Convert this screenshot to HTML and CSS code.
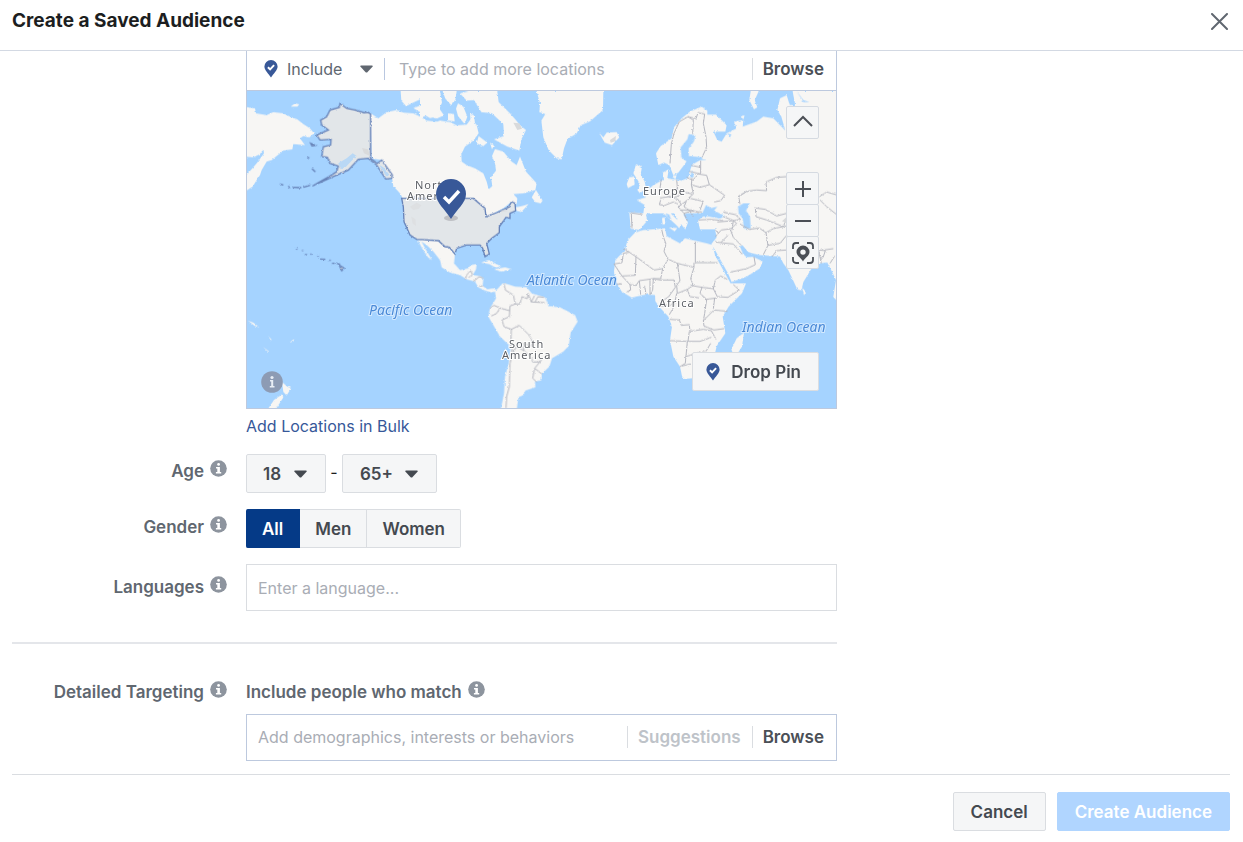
FILE: index.html
```html
<!DOCTYPE html>
<html lang="en">
<head>
<meta charset="utf-8">
<meta name="viewport" content="width=device-width, initial-scale=1">
<title>Create a Saved Audience</title>
<link rel="stylesheet" href="styles.css">
</head>
<body>
<svg class="sprite" aria-hidden="true">
  <symbol id="info" viewBox="0 0 17 17">
    <circle cx="8.500" cy="8.500" r="8.300" fill="#8d949e"/>
    <circle cx="8.600" cy="4.400" r="1.400" fill="#fff"/>
    <path d="M6 7h3.900v5h1.300v1.500H5.900V12h1.400V8.500H6z" fill="#fff"/>
  </symbol>
  <symbol id="pin" viewBox="0 0 14 18">
    <path d="M7 0a6.600 6.600 0 0 0-6.600 6.600C.4 10.400 4.800 14 7 17.600 9.200 14 13.600 10.400 13.600 6.600A6.600 6.600 0 0 0 7 0z" fill="#385898"/>
    <path d="M3.900 7.200l2.200 2.100 4-4.200" fill="none" stroke="#fff" stroke-width="1.900"/>
  </symbol>
  <symbol id="caret" viewBox="0 0 13 8">
    <path d="M1 .5h11q1.200.3.500 1.300L7.600 7q-1.100 1-2.200 0L.5 1.800Q-.2.800 1 .5z" fill="currentColor"/>
  </symbol>
</svg>

<header class="header">
  <h1 class="title">Create a Saved Audience</h1>
  <button class="close" type="button" aria-label="Close">
    <svg width="17" height="17" viewBox="0 0 17 17"><path d="M1 1l15 15M16 1L1 16" stroke="#606770" stroke-width="2" stroke-linecap="round"/></svg>
  </button>
</header>

<main class="form">
  <section class="row">
    <div class="control">
      <div class="location">
        <div class="location-bar">
          <svg class="pin" width="14" height="18"><use href="#pin"/></svg>
          <span class="picker">
            <select class="include" aria-label="Include or exclude"><option>Include</option></select>
            <svg class="caret" width="13" height="8"><use href="#caret"/></svg>
          </span>
          <input class="bar-input" type="text" placeholder="Type to add more locations" aria-label="Add locations">
          <button class="browse" type="button">Browse</button>
        </div>
        <div class="map">
          <svg class="world" viewBox="0 0 589 317" preserveAspectRatio="xMidYMid slice" role="img" aria-label="World map">
            <defs>
              <filter id="coast" x="-5%" y="-5%" width="110%" height="110%">
                <feTurbulence type="fractalNoise" baseFrequency="0.16" numOctaves="3" seed="4"/>
                <feDisplacementMap in="SourceGraphic" scale="7" xChannelSelector="R" yChannelSelector="G"/>
              </filter>
            </defs>
            <rect width="589" height="317" fill="#a5d3ff"/>
            <g transform="translate(-7 -41) scale(.33333)">
              <g class="land" filter="url(#coast)">
                <!-- Siberia and western Canada -->
                <path d="M0 168L45 175 48 190 80 195 100 186 130 190 150 200 172 208 190 222 210 235 222 250 208 262 190 258 180 265 195 285 160 282 157 298 130 302 95 330 80 335 65 360 60 375 50 390 38 410 22 420 0 420V350L22 372 50 340 72 310 70 298 60 312 40 322 0 318z"/>
                <path d="M152 170L165 160 178 163 172 170z"/>
                <path d="M392 190L415 205 440 186 470 180 490 188 520 190 545 202 560 212 600 216V470L490 450 482 432 460 408 455 380 425 330 395 325z"/>
                <path d="M482 124H545V146L515 160 498 168 484 152zM520 174L545 165 562 150 600 130V198L570 204 550 192z"/>
                <!-- Canada, Arctic islands, Greenland, Iceland -->
                <g transform="translate(540)">
                  <path d="M0 212L30 222 60 212 90 216 110 226 140 224 154 205 170 225 176 250 160 272 135 290 124 312 125 335 140 345 165 355 190 370 200 395 206 418 217 408 213 382 228 362 225 340 216 318 225 297 250 305 275 335 290 345 300 320 318 365 350 400 346 420 310 430 280 432 292 445 290 462 275 455 250 475 200 502 190 480 160 445 0 470z"/>
                  <path d="M0 124H60L66 158 58 176 72 196 50 206 20 196 0 204z"/>
                  <path d="M68 124H110L106 150 92 164 76 146zM114 160L130 170 142 200 134 222 114 198 108 176zM84 190L102 192 104 214 84 212zM120 130L146 124H232L236 156 270 190 284 206 300 225 318 240 304 268 298 302 262 290 222 268 252 258 250 222 216 190 184 186 162 150 140 152z"/>
                  <path d="M150 190L162 196 165 220 152 212zM176 258L202 278 190 288 170 280zM210 278L222 286 216 298z"/>
                  <path d="M286 472L306 468 326 462 304 486 288 482zM335 442L348 420 368 452 362 460 346 456z"/>
                  <path d="M350 124H550L549 180 510 214 482 226 470 250 442 268 432 295 425 328 410 325 386 300 370 262 364 212 376 192 358 186 360 160z"/>
                  <path d="M537 248L550 262 560 248 590 246 598 262 576 285 554 278z"/>
                </g>
                <!-- Central and South America -->
                <g transform="translate(480 390)">
                  <path d="M50 175L115 182 135 200 148 202 165 222 162 250 180 270 205 265 212 255 230 252 228 268 218 285 240 288 250 295 248 318 262 328 280 325 292 332 275 338 255 332 235 322 225 305 200 298 180 285 150 278 125 262 120 240 100 215 80 195z"/>
                  <path d="M53 180L64 184 77 208 96 240 84 232 68 208zM243 248L265 240 304 260 286 263 268 252zM282 268L315 262 336 268 304 275z"/>
                  <path d="M285 335L308 310 322 312 345 320 380 322 395 340 435 352 446 378 480 382 525 405 533 425 512 458 506 498 490 515 456 535 448 560 425 582 425 600 405 605 406 622 376 632 370 645 355 652 350 690H302L312 640 315 590 326 550 332 500 300 470 265 410 270 385 288 355z"/>
                </g>
                <!-- Northern Europe and Russia -->
                <g transform="translate(1110)">
                  <path d="M145 345L138 310 152 288 185 265 192 232 215 205 240 185 275 170 292 182 292 330 240 320 226 340 205 368 190 376 178 345 162 338z"/>
                  <path d="M162 388L158 368 176 358 172 385 215 392 234 384 245 345 270 330 288 330 284 194 318 194 350 225 346 245 310 245 322 270 335 275 350 250 380 235 372 215 400 210 398 230 440 215 460 200 490 205 526 242 514 200 502 180 510 145 530 135 538 160 556 170 548 124H700V490H110L112 470 80 450 108 442 100 432 130 405z"/>
                  <path d="M90 430L108 415 104 395 92 372 96 350 78 343 70 370 84 392 90 404 82 420zM50 402L58 382 72 380 74 404 54 414zM422 124H446L434 150 442 172 432 178 418 150zM392 198L404 196 400 208zM185 378L200 376 196 388z"/>
                </g>
                <!-- Southern Europe, Asia, Africa -->
                <g transform="translate(1080 450)">
                  <path d="M88 38L130 40 134 10H730V310L700 290 708 240 696 215 682 188 655 190 635 205 610 246 604 272 592 268 565 210 550 190 540 170 480 165 445 158 428 136 420 140 434 164 458 170 488 184 480 205 440 230 395 246 384 220 345 150 334 132 350 112 345 88 300 88 294 62 310 48 300 26 270 36 250 44 264 68 256 88 238 66 222 40 200 22 206 34 228 56 246 66 238 84 226 72 190 40 160 30 138 44 142 62 118 90 92 86z"/>
                  <path d="M105 98L130 90 195 85 200 108 240 130 255 115 320 130 338 135 345 165 375 220 392 250 438 250 426 280 386 320 368 350 376 400 350 438 345 460 300 510 275 535 248 538 240 500 220 470 210 420 216 380 205 350 182 325 166 304 165 285 140 283 95 293 65 275 48 245 42 215 46 180 75 150 82 122z"/>
                  <path d="M432 398L426 440 404 474 394 448 410 415zM206 82L232 84 224 94zM186 54L194 52 196 72 188 74zM606 262L618 276 612 286zM698 288L712 296V304z"/>
                </g>
                <!-- New Zealand and Pacific islands -->
                <g transform="translate(0 510)">
                  <path d="M82 570L102 540 126 523 130 532 106 570zM126 486L142 500 154 504 140 526 130 516zM148 368L163 357 160 364zM68 380L88 395 84 395zM24 302L40 308 58 322 44 318zM84 348L96 360 92 360z"/>
                </g>
              </g>

              <g class="water" filter="url(#coast)">
                <g transform="translate(1110)">
                  <path d="M214 322L212 292 232 268 236 252 256 256 252 274 236 296 237 318 276 322 276 329 248 333 244 350 226 358 230 335zM272 500L288 465 304 474 322 470 312 482 345 498 330 506 296 500zM384 470L400 460 420 460 408 482 420 500 422 536 402 536 398 506 386 490zM534 136L546 130 554 160 540 166zM560 124L580 150 598 156 580 156zM240 384L246 360 252 380zM352 250L364 254 360 262z"/>
                </g>
                <g transform="translate(1080 450)">
                  <path d="M196 40L208 44 214 60 202 52zM420 136L444 156 470 168 440 172 428 160z"/>
                </g>
              </g>

              <g class="borders" filter="url(#coast)">
                <g transform="translate(480 390)">
                  <path d="M196 298L200 285 212 272 218 285 206 292M220 304L238 290 250 295M238 318L248 318M312 312L316 330 340 345 346 372 330 378 328 410 306 420 312 440 334 448 358 436 384 462 395 478 396 498M346 372L360 372 366 350 382 356 384 340M384 340L394 366 404 346M404 368L414 350 432 352M394 366L434 368M270 385L282 376 300 384 290 400 274 408M300 384L328 392M334 448L332 500 340 515 350 500 372 512 368 490 396 498M340 515L330 550 328 620 320 650 318 684M372 512L395 535 398 546 416 546 424 540 404 565 398 595 410 606M404 565L426 582"/>
                </g>
                <g transform="translate(1110)">
                  <path d="M180 340L184 282 192 250 208 215 234 200 250 210 248 252M234 200L258 206 264 188 284 192 280 220 288 260 290 292 276 322M272 332L272 372 238 364M244 346L272 352M230 382L248 390 266 372 290 376 298 404 270 412 244 404 246 384M298 404L344 436 332 452 312 456M244 404L250 432 236 444 262 450 280 454 270 480M154 388L150 414 176 440 200 440 222 426 246 432M150 444L176 440 204 448 214 464 238 446M152 450L148 464 164 466 190 456 204 462M214 464L204 470 222 490 240 484 250 500M230 452L222 470 242 484 276 486M222 490L232 512M64 490L66 534M60 488L98 494M200 390L204 430M530 380L500 382 468 396 470 422 440 420 410 424 386 440 390 462M436 474L466 478 500 498 530 490M436 474L438 500 470 510 520 530 530 504M628 440L650 426 678 434M630 450L650 470 678 492M340 486L376 494 392 508 372 512 340 500M370 512L366 540M410 424L384 440"/>
                </g>
                <g transform="translate(1080 450)">
                  <path d="M185 88L190 110 198 132 192 154 204 178 188 206 162 210 108 170 72 146M108 170L106 226 66 228 42 192M42 192L66 188 70 160 88 156M206 178L232 190 282 202M286 125V188H354M282 188L282 202 272 236 280 256 262 268 232 280 230 256 240 242 232 190M188 206L182 236 160 236 118 242 108 256 90 254 66 228M160 236L158 270 150 284M118 242L122 284M134 258L138 284M150 240V284M90 254L92 270 80 276M66 252L50 252M160 236L180 240 222 240 226 262 206 290 186 304M230 280L222 320 208 344M272 256L306 262 340 266 346 240 362 228 382 238M340 266L352 290 384 292 418 270 400 254M306 262L300 280 320 298 348 294M320 298L314 340 310 362 342 330 384 334M344 294L340 326M262 268L270 290 300 294 M182 318L210 318 226 300M310 362L312 378 342 390 372 386M210 358L238 360 244 376 268 374 270 394 310 388 334 392 348 418M210 422L262 424 300 424 334 412M268 394L264 424M262 424L256 490 240 500M256 470L290 460 318 454 332 430M246 498L270 492M346 110L364 90 394 86 410 70 400 62 352 66M346 126L362 128 384 106M362 128L400 132 428 164M390 86L400 112 424 136M392 216L440 206 466 194 462 170M420 72L448 88 478 84 498 98 504 136 490 164M498 98L520 86 558 78M504 136L540 130 560 106M516 170L530 152 560 150M660 150L676 152 670 170 662 180M672 150L700 146M690 190L704 168M656 152L664 190M240 30L276 30 300 40M296 60L330 58 370 62M346 90L356 100"/>
                </g>
              </g>

              <g class="selected" filter="url(#coast)">
                <path d="M300 160L320 175 345 180 372 188 385 187 392 192V325L412 340 425 330 457 375 455 385 437 387 410 345 385 325 355 328 325 360 290 375 235 400 228 402 270 378 290 365 295 348 270 340 262 322 245 320 250 290 272 285 273 268 240 270 230 255 265 240 245 225 242 210 260 200 270 180 298 172z"/>
                <path d="M228 402L218 408M210 406L190 412M184 413L158 412M150 414L145 408M130 405L120 402M216 356L226 366M202 322L208 324M212 280L226 286 216 288zM168 596L172 598M186 601L190 602M195 614L201 614M211 612L215 613M232 617L236 619M239 627L256 628M268 630L272 632M276 640L284 640M290 640L300 643M298 646L312 654 305 662z"/>
                <path transform="translate(480 390)" d="M5 55H220L255 85 258 110 290 98 325 82 335 65 345 70 347 92 330 100 330 115 318 112 298 140 298 158 275 175 260 190 268 222 255 230 248 205 240 195 200 195 170 205 165 222 148 202 135 200 115 182 50 178 30 165 12 125 10 80z"/>
              </g>
              <g class="inlets" filter="url(#coast)">
                <path d="M295 340L320 325 338 310 350 318 335 332 318 350 302 358zM418 345L430 352 448 374 440 380 428 362z"/>
              </g>
              <g fill="#d9dadb">
                <path d="M366 294L384 298 390 318 372 310zM820 218L838 220 846 236 832 240zM1110 270L1128 258 1126 274 1112 278zM1626 514L1640 500V518z"/>
                <path d="M510 470l20-12 14 8-8 10-16 4zM514 500l4 20 10 8-2-20zM780 482l14-4 8 6-16 3z" opacity=".5"/>
              </g>
            </g>
            <g class="places">
              <text x="168" y="98">North</text>
              <text x="160" y="109">America</text>
              <text x="396" y="104">Europe</text>
              <text x="412" y="216">Africa</text>
              <text x="262" y="257">South</text>
              <text x="255" y="268">America</text>
            </g>
            <g class="oceans">
              <text x="122" y="224">Pacific Ocean</text>
              <text x="280" y="194">Atlantic Ocean</text>
              <text x="495" y="241">Indian Ocean</text>
            </g>
            <ellipse cx="204" cy="127" rx="7" ry="3" fill="#6d6a72" opacity=".3"/>
            <path d="M204 88a15 15 0 0 0-15 15c0 9 9 15 15 25 6-10 15-16 15-25a15 15 0 0 0-15-15z" fill="#385898"/>
            <path d="M197 106l5 5 10-11" fill="none" stroke="#fff" stroke-width="3.400"/>
          </svg>

          <button class="map-info" type="button" aria-label="Map information">
            <svg width="22" height="22" viewBox="0 0 22 22"><circle cx="11" cy="11" r="10.800" fill="#8d9bb4"/><circle cx="11" cy="6.500" r="1.600" fill="#e9eef5"/><path d="M9 9h3.200v6h1.300v1.500H8.800V15h1.400v-4.500H9z" fill="#e9eef5"/></svg>
          </button>
          <div class="map-tools">
            <button class="tool" type="button" aria-label="Collapse map">
              <svg width="20" height="16" viewBox="0 0 20 16"><path d="M1 11l9-9 9 9" fill="none" stroke="#4b4f56" stroke-width="2"/></svg>
            </button>
            <div class="zoom">
              <button class="tool" type="button" aria-label="Zoom in">
                <svg width="16" height="16" viewBox="0 0 16 16"><path d="M0 8h16M8 0v16" stroke="#4b4f56" stroke-width="2"/></svg>
              </button>
              <button class="tool" type="button" aria-label="Zoom out">
                <svg width="16" height="16" viewBox="0 0 16 16"><path d="M0 8h16" stroke="#4b4f56" stroke-width="2"/></svg>
              </button>
              <button class="tool" type="button" aria-label="Centre on pin">
                <svg width="22" height="22" viewBox="0 0 22 22"><path d="M1 7V4a3 3 0 0 1 3-3h3M15 1h3a3 3 0 0 1 3 3v3M21 15v3a3 3 0 0 1-3 3h-3M7 21H4a3 3 0 0 1-3-3v-3" fill="none" stroke="#4b4f56" stroke-width="1.800"/><path fill-rule="evenodd" d="M11 3.500a6.500 6.500 0 0 0-6.500 6.500c0 3.900 4.500 5.500 6.500 9.500 2-4 6.500-5.600 6.500-9.500A6.500 6.500 0 0 0 11 3.500zm0 3.900a2.700 2.700 0 1 1 0 5.400 2.700 2.700 0 0 1 0-5.400z" fill="#4b4f56"/></svg>
              </button>
            </div>
          </div>
          <button class="button drop-pin" type="button">
            <svg width="14" height="18"><use href="#pin"/></svg>Drop Pin
          </button>
        </div>
      </div>
      <a class="bulk" href="#">Add Locations in Bulk</a>
    </div>
  </section>

  <section class="row">
    <div class="label"><label for="age-min">Age</label><svg class="info" width="17" height="17"><use href="#info"/></svg></div>
    <div class="control ages">
      <span class="picker">
        <select class="button age age-min" id="age-min"><option>18</option></select>
        <svg class="caret age-caret" width="13" height="8"><use href="#caret"/></svg>
      </span>
      <span class="dash">-</span>
      <span class="picker">
        <select class="button age age-max" aria-label="Maximum age"><option>65+</option></select>
        <svg class="caret age-caret" width="13" height="8"><use href="#caret"/></svg>
      </span>
    </div>
  </section>

  <section class="row">
    <div class="label"><span id="gender">Gender</span><svg class="info" width="17" height="17"><use href="#info"/></svg></div>
    <div class="control segments" role="group" aria-labelledby="gender">
      <button class="segment active" type="button" aria-pressed="true">All</button>
      <button class="segment" type="button" aria-pressed="false">Men</button>
      <button class="segment" type="button" aria-pressed="false">Women</button>
    </div>
  </section>

  <section class="row">
    <div class="label tall"><label for="languages">Languages</label><svg class="info" width="17" height="17"><use href="#info"/></svg></div>
    <input class="field" id="languages" type="text" placeholder="Enter a language...">
  </section>

  <hr class="rule">

  <section class="row">
    <div class="label plain"><span>Detailed Targeting</span><svg class="info" width="17" height="17"><use href="#info"/></svg></div>
    <div class="control">
      <div class="label plain match"><label for="match">Include people who match</label><svg class="info" width="17" height="17"><use href="#info"/></svg></div>
      <div class="targeting">
        <input class="bar-input" id="match" type="text" placeholder="Add demographics, interests or behaviors">
        <button class="browse muted" type="button" disabled>Suggestions</button>
        <button class="browse" type="button">Browse</button>
      </div>
    </div>
  </section>
</main>

<footer class="footer">
  <button class="button" type="button">Cancel</button>
  <button class="button primary" type="button" disabled>Create Audience</button>
</footer>
</body>
</html>
```
FILE: styles.css
```css
* { box-sizing: border-box; }

body {
  margin: 0;
  min-height: 100vh;
  display: flex;
  flex-direction: column;
  background: #fff;
  color: #606770;
  font: 400 16px/22px Inter, "Liberation Sans", sans-serif;
}

button, input, select {
  margin: 0;
  padding: 0;
  border: 0;
  background: none;
  color: inherit;
  font: inherit;
}

button { cursor: pointer; }
svg { display: block; flex: none; }
.sprite { position: absolute; width: 0; height: 0; }

.header {
  display: flex;
  align-items: center;
  justify-content: space-between;
  height: 51px;
  padding: 0 15px 8px 12px;
  border-bottom: 1px solid #d3d9e3;
}

.title {
  margin: 0;
  color: #1c1e21;
  font-size: 19px;
  font-weight: 700;
  line-height: 24px;
}

.form {
  flex: 1;
  display: flex;
  flex-direction: column;
  gap: 16px;
  width: 100%;
  max-width: 849px;
  padding: 0 12px 13px;
}

.row {
  display: grid;
  grid-template-columns: 215px minmax(0, 1fr);
  column-gap: 19px;
}

.control { grid-column: 2; min-width: 0; }

.label {
  display: flex;
  justify-content: flex-end;
  gap: 6px;
  padding-top: 7px;
  font-size: 17px;
  font-weight: 600;
}

.tall { padding-top: 12px; }
.plain { padding-top: 0; }
.match { justify-content: flex-start; margin-bottom: 11px; }

.location { border: 1px solid #bdc9de; border-top: 0; }

.location-bar {
  display: flex;
  align-items: center;
  height: 40px;
  padding: 0 0 3px 17px;
  border-bottom: 1px solid #bdc9de;
}

.picker { position: relative; display: inline-flex; }

.include {
  appearance: none;
  width: 107px;
  height: 22px;
  padding-left: 9px;
  border-right: 1px solid #b9c7e0;
}

.caret {
  position: absolute;
  top: 50%;
  right: 12px;
  margin-top: -4px;
  pointer-events: none;
}

.bar-input { flex: 1; min-width: 0; padding: 0 14px; outline: 0; }
::placeholder { color: #a9adb5; opacity: 1; }

.browse {
  padding: 0 12px 0 10px;
  border-left: 1px solid #dadde1;
  color: #4b4f56;
  font-size: 17px;
  font-weight: 600;
}

.muted { padding-right: 11px; color: #bec3c9; }

.map { position: relative; height: 317px; overflow: hidden; }
.world { width: 100%; height: 100%; }
.land { fill: #f7f6f4; }
.water { fill: #a5d3ff; }
.borders { fill: none; stroke: #b4b6bf; stroke-width: 3; }
.selected { fill: #e2e6e9; stroke: #6682b8; stroke-width: 4; }
.inlets { fill: #b9d8f5; }

.places {
  fill: #5d6066;
  stroke: #fff;
  stroke-width: 2px;
  paint-order: stroke;
  font-family: "Noto Sans", sans-serif;
  font-size: 11px;
  letter-spacing: 1px;
}

.oceans {
  fill: #4a8ad8;
  stroke: #d5eaff;
  stroke-width: 2px;
  paint-order: stroke;
  font-family: "Noto Sans", sans-serif;
  font-size: 14px;
  font-style: italic;
}

.map-info { position: absolute; left: 14px; bottom: 15px; }

.map-tools {
  position: absolute;
  top: 15px;
  right: 17px;
  display: grid;
  gap: 33px;
}

.tool {
  display: grid;
  place-items: center;
  width: 33px;
  height: 33px;
  border: 1px solid #d5dae1;
  border-radius: 2px;
  background: #f5f6f7;
}

.zoom .tool + .tool { margin-top: -1px; }

.button {
  height: 39px;
  padding: 0 17px;
  border: 1px solid #dadde1;
  border-radius: 2px;
  background: #f5f6f7;
  color: #444950;
  font-size: 17px;
  font-weight: 600;
}

.drop-pin {
  position: absolute;
  right: 17px;
  bottom: 17px;
  display: flex;
  align-items: center;
  gap: 11px;
  padding: 0 17px 0 13px;
}

.bulk {
  display: block;
  width: fit-content;
  margin-top: 6px;
  color: #365899;
  text-decoration: none;
}

.ages { display: flex; align-items: center; margin-top: 1px; }
.age { appearance: none; padding: 0 16px; }
.age-min { width: 80px; }
.age-max { width: 95px; padding-left: 17px; }
.age-caret { right: 19px; color: #444950; }
.dash { width: 16px; padding-bottom: 3px; color: #1c1e21; text-align: center; }

.segments { display: flex; }

.segment {
  height: 39px;
  padding: 0 15px;
  border: solid #dadde1;
  border-width: 1px 1px 1px 0;
  background: #f5f6f7;
  color: #444950;
  font-size: 17px;
  font-weight: 600;
}

.segment:last-child { border-radius: 0 2px 2px 0; }
.active { padding: 0 16px; border-color: #053a87; border-radius: 2px 0 0 2px; background: #053a87; color: #fff; }

.field {
  width: 100%;
  height: 47px;
  padding: 0 11px;
  border: 1px solid #dadde1;
}

.rule {
  width: 100%;
  margin: 15px 0 21px;
  border: 0;
  border-top: 2px solid #e4e6ea;
}

.targeting {
  display: flex;
  align-items: center;
  height: 47px;
  padding-bottom: 2px;
  border: 1px solid #bdc9de;
}

.targeting .bar-input { padding: 0 11px; }

.footer {
  display: flex;
  justify-content: flex-end;
  gap: 11px;
  margin: 0 13px 0 12px;
  padding: 17px 0 11px;
  border-top: 1px solid #dadde1;
}

.primary { border-color: #b0d5ff; background: #b0d5ff; color: #fff; }
```
